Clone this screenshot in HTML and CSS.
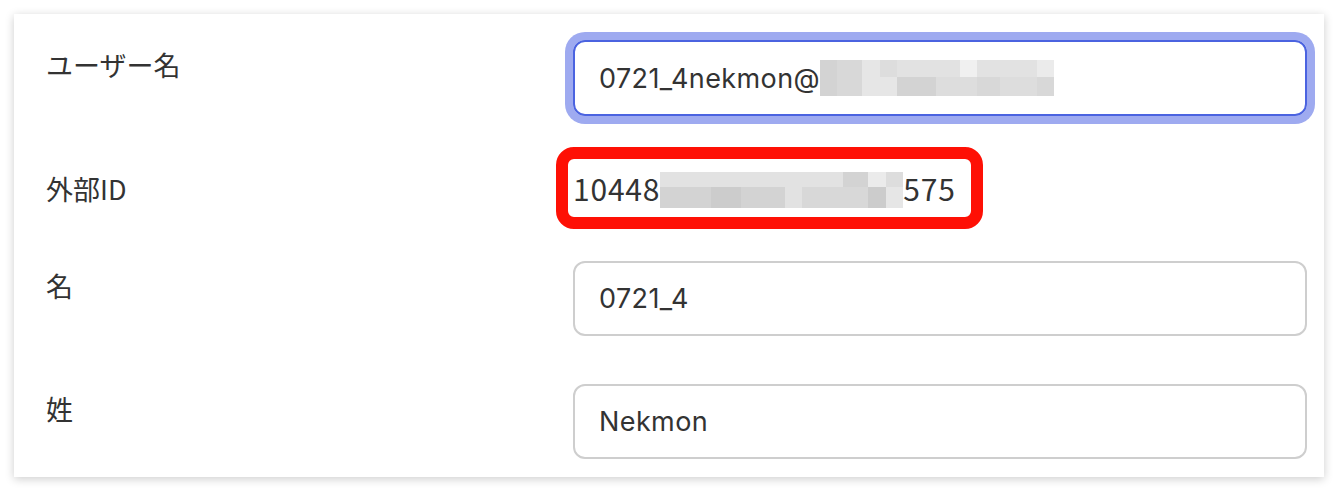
FILE: index.html
```html
<!DOCTYPE html>
<html lang="ja">
<head>
  <meta charset="UTF-8" />
  <meta name="viewport" content="width=device-width, initial-scale=1.0"/>
  <title>ユーザー詳細</title>
  <link rel="stylesheet" href="styles.css">
</head>
<body>
  <div class="page">
    <form class="card">
      <div class="label">ユーザー名</div>
      <div class="input focus">0721_4nekmon@<span class="mosaic mail">
          <i class="s2"></i><i class="s2"></i>
          <i class="s3"></i><i class="s3"></i>
          <i class="s6"></i><i class="s6"></i>
          <i class="s4"></i><i class="s6"></i>
          <i class="s5"></i><i class="s2"></i>
          <i class="s5"></i><i class="s4"></i>
          <i class="s8"></i><i class="s4"></i>
          <i class="s5"></i><i class="s3"></i>
          <i class="s5"></i><i class="s4"></i>
          <i class="s7"></i><i class="s3"></i>
        </span></div>

      <div class="label">外部ID</div>
      <div class="value"><span class="marked">10448<span class="mosaic ext">
          <i class="s5"></i><i class="s2"></i>
          <i class="s5"></i><i class="s2"></i>
          <i class="s5"></i><i class="s1"></i>
          <i class="s5"></i><i class="s2"></i>
          <i class="s5"></i><i class="s2"></i>
          <i class="s5"></i><i class="s5"></i>
          <i class="s5"></i><i class="s3"></i>
          <i class="s5"></i><i class="s3"></i>
          <i class="s2"></i><i class="s3"></i>
          <i class="s7"></i><i class="s1"></i>
          <i class="s4"></i><i class="s6"></i>
        </span>575</span></div>

      <div class="label">名</div>
      <div class="input">0721_4</div>

      <div class="label">姓</div>
      <div class="input">Nekmon</div>
    </form>
  </div>
</body>
</html>
```

FILE: styles.css
```css
body {
  margin: 0;
  background: #fff;
  color: #333;
  font-family: "Noto Sans CJK JP", sans-serif;
}
.page {
  padding: 14px;
}
.card {
  display: grid;
  grid-template-columns: 527px 1fr;
  row-gap: 48px;
  background: #fff;
  padding: 26px 17px 18px 32px;
  box-shadow: 0 2px 9px rgba(0,0,0,0.2);
}
.label {
  font-size: 27px;
  line-height: 49px;
}
.input {
  height: 75px;
  box-sizing: border-box;
  display: flex;
  align-items: center;
  padding: 0 24px;
  border: 2px solid #cecece;
  border-radius: 12px;
  font-family: Inter, sans-serif;
  font-size: 27px;
  letter-spacing: 0.4px;
}
.input.focus {
  height: 76px;
  border-color: #4b63e0;
  box-shadow: 0 0 0 8px #9eaaf0;
}
.value {
  font-size: 30px;
  line-height: 49px;
  letter-spacing: 0.8px;
}
/* red frame drawn round the external id */
.marked {
  position: relative;
  display: inline-block;
  padding-right: 10px;
}
.marked::before {
  content: "";
  position: absolute;
  top: -17px;
  left: -17px;
  right: -17px;
  bottom: -16px;
  border: 12px solid #fe1005;
  border-radius: 18px;
}
/* pixelated masking of private text */
.mosaic {
  display: inline-grid;
  grid-auto-flow: column;
  vertical-align: middle;
}
.mosaic i {
  display: block;
}
.mail {
  grid-template-rows: 17px 19px;
  grid-template-columns: 17px 25px 18px 17px 39px 24px 17px 23px 37px 17px;
}
.ext {
  grid-template-rows: 15px 21px;
  grid-template-columns: 19px 32px 30px 27px 17px 17px 20px 21px 25px 18px 17px;
  margin-top: -6px;
}
.s1 { background: #cccccc; }
.s2 { background: #d3d3d3; }
.s3 { background: #d8d8d8; }
.s4 { background: #dddddd; }
.s5 { background: #e2e2e2; }
.s6 { background: #e6e6e6; }
.s7 { background: #ebebeb; }
.s8 { background: #f0f0f0; }
```
